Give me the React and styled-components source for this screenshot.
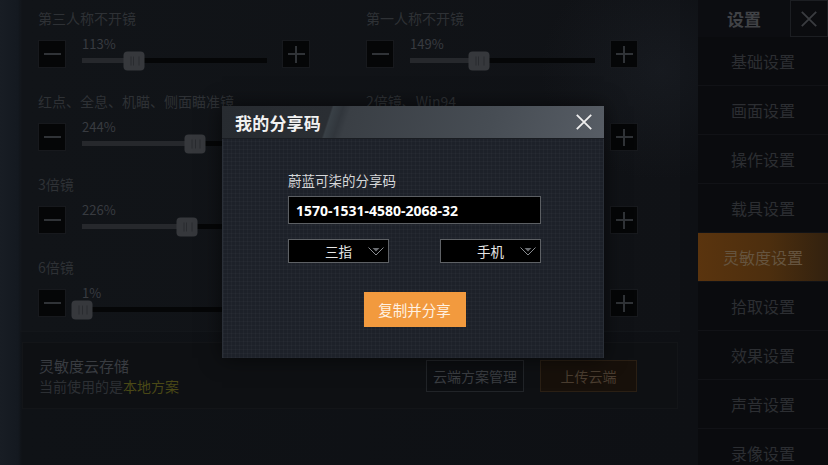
import React from "react";
import styled, { createGlobalStyle } from "styled-components";

const GlobalStyle = createGlobalStyle`
  html, body {
    margin: 0;
    padding: 0;
    background: #0d0f12;
  }
  body {
    font-family: "Noto Sans CJK SC", "Noto Sans", sans-serif;
  }
  * {
    box-sizing: border-box;
  }
`;

const MAX = 400;

// rows behind the dialog keep their controls but show no text
const settings = [
  { label: "第三人称不开镜", value: 113 },
  { label: "第一人称不开镜", value: 149 },
  { label: "红点、全息、机瞄、侧面瞄准镜", value: 244 },
  { label: "2倍镜、Win94", value: 200, covered: true },
  { label: "3倍镜", value: 226 },
  { label: "", value: 180, covered: true },
  { label: "6倍镜", value: 1 },
  { label: "", value: 100, covered: true },
];

const menu = [
  "基础设置",
  "画面设置",
  "操作设置",
  "载具设置",
  "灵敏度设置",
  "拾取设置",
  "效果设置",
  "声音设置",
  "录像设置",
];

const CloseIcon = ({ size, color }) => (
  <svg width={size} height={size} viewBox="0 0 20 20">
    <path d="M2 2 L18 18 M18 2 L2 18" stroke={color} strokeWidth="2" fill="none" />
  </svg>
);

const Chevron = () => (
  <svg width="16" height="9" viewBox="0 0 16 9">
    <polyline points="0.5,0.5 8,8 15.5,0.5" stroke="#8a8d91" strokeWidth="1" fill="none" />
    <polygon points="4.5,1 11.5,1 8,4.5" fill="#6b6e72" />
  </svg>
);

const Setting = ({ label, value, covered }) => {
  const pct = (value / MAX) * 100;
  return (
    <SettingBlock>
      <Label>{label}</Label>
      <Controls>
        <StepButton>
          <Bar />
        </StepButton>
        <Slider>
          <Percent>{covered ? "" : `${value}%`}</Percent>
          <Track>
            <Fill style={{ width: `${pct}%` }} />
            <Thumb style={{ left: `${pct}%` }} />
          </Track>
        </Slider>
        <StepButton>
          <Bar />
          <Bar $vertical />
        </StepButton>
      </Controls>
    </SettingBlock>
  );
};

export default function App() {
  return (
    <>
      <GlobalStyle />
      <Screen>
        <Main>
          <SettingsPanel>
            <SettingsGrid>
              {settings.map((s, i) => (
                <Setting key={i} {...s} />
              ))}
            </SettingsGrid>
          </SettingsPanel>
          <CloudBox>
            <CloudText>
              <CloudTitle>灵敏度云存储</CloudTitle>
              <CloudSub>
                当前使用的是<Local>本地方案</Local>
              </CloudSub>
            </CloudText>
            <CloudButton>云端方案管理</CloudButton>
            <CloudButton $upload>上传云端</CloudButton>
          </CloudBox>
        </Main>

        <Sidebar>
          <SideHeader>
            <SideTitle>设置</SideTitle>
            <SideClose>
              <CloseIcon size={18} color="#3a3c40" />
            </SideClose>
          </SideHeader>
          {menu.map((m) => (
            <MenuItem key={m} $active={m === "灵敏度设置"}>
              {m}
            </MenuItem>
          ))}
        </Sidebar>

        <Modal>
          <ModalHeader>
            <ModalTitle>我的分享码</ModalTitle>
            <ModalClose>
              <CloseIcon size={18} color="#f0f0f0" />
            </ModalClose>
          </ModalHeader>
          <ModalBody>
            <Content>
              <CodeLabel>蔚蓝可柒的分享码</CodeLabel>
              <CodeBox>1570-1531-4580-2068-32</CodeBox>
              <SelectRow>
                <Select>
                  三指
                  <ChevronSlot>
                    <Chevron />
                  </ChevronSlot>
                </Select>
                <Select>
                  手机
                  <ChevronSlot>
                    <Chevron />
                  </ChevronSlot>
                </Select>
              </SelectRow>
              <ShareButton>复制并分享</ShareButton>
            </Content>
          </ModalBody>
        </Modal>
      </Screen>
    </>
  );
}

const Screen = styled.div`
  position: relative;
  width: 828px;
  height: 465px;
  display: flex;
  overflow: hidden;
  background: #0d0f12;
`;

const Main = styled.div`
  width: 698px;
  height: 100%;
  padding-left: 20px;
  background:
    radial-gradient(ellipse 120px 110px at 660px 70px, rgba(60, 70, 84, 0.14), transparent),
    linear-gradient(90deg, #181d24 0px, #141920 18px, #0f1216 22px, #0e1014 100%);
`;

const SettingsPanel = styled.div`
  width: 660px;
  height: 332px;
  background: rgba(255, 255, 255, 0.01);
  border-bottom: 1px solid #13161a;
`;

const SettingsGrid = styled.div`
  display: grid;
  grid-template-columns: 272px 272px;
  column-gap: 56px;
  row-gap: 24px;
  padding: 9px 0 0 18px;
`;

const SettingBlock = styled.div`
  display: flex;
  flex-direction: column;
`;

const Label = styled.div`
  height: 18px;
  line-height: 18px;
  font-size: 14px;
  color: #2e3135;
  white-space: nowrap;
  margin-bottom: 13px;
`;

const Controls = styled.div`
  display: flex;
  align-items: flex-start;
  height: 28px;
`;

const StepButton = styled.div`
  position: relative;
  width: 28px;
  height: 28px;
  flex: none;
  background: #050607;
  border: 1px solid #17191d;
  display: flex;
  align-items: center;
  justify-content: center;
`;

const Bar = styled.span`
  position: absolute;
  background: #303337;
  width: ${(p) => (p.$vertical ? "2px" : "17px")};
  height: ${(p) => (p.$vertical ? "17px" : "2px")};
`;

const Slider = styled.div`
  flex: 1;
  margin: -3px 15px 0 16px;
`;

const Percent = styled.div`
  height: 14px;
  line-height: 14px;
  font-size: 13px;
  color: #383b40;
`;

const Track = styled.div`
  position: relative;
  height: 5px;
  margin-top: 7px;
  background: #050607;
`;

const Fill = styled.div`
  height: 100%;
  background: #26282c;
`;

const Thumb = styled.div`
  position: absolute;
  top: 50%;
  width: 21px;
  height: 19px;
  border-radius: 4px;
  background: #36383c;
  transform: translate(-50%, -50%);

  &::before {
    content: "";
    position: absolute;
    left: 7px;
    top: 5px;
    width: 7px;
    height: 9px;
    border-left: 1px solid #292b2f;
    border-right: 1px solid #292b2f;
    background: linear-gradient(90deg, transparent 2px, #292b2f 2px, #292b2f 3px, transparent 3px);
  }
`;

const CloudBox = styled.div`
  display: flex;
  align-items: center;
  gap: 16px;
  width: 656px;
  height: 67px;
  margin: 10px 0 0 2px;
  padding: 0 40px 0 16px;
  background: #0e1013;
  border: 1px solid #131518;
`;

const CloudText = styled.div`
  flex: 1;
  display: flex;
  flex-direction: column;
`;

const CloudTitle = styled.div`
  font-size: 15px;
  line-height: 21px;
  color: #393c41;
`;

const CloudSub = styled.div`
  font-size: 14px;
  line-height: 21px;
  color: #2c2f33;
`;

const Local = styled.span`
  color: #4a4816;
`;

const CloudButton = styled.div`
  width: ${(p) => (p.$upload ? "97px" : "98px")};
  height: 32px;
  display: flex;
  align-items: center;
  justify-content: center;
  font-size: 14px;
  color: ${(p) => (p.$upload ? "#4a3d30" : "#3a3d41")};
  background: ${(p) => (p.$upload ? "#17100a" : "#0c0e11")};
  border: 1px solid ${(p) => (p.$upload ? "#2a1f14" : "#212428")};
`;

const Sidebar = styled.div`
  width: 130px;
  height: 100%;
  background: #0a0b0e;
  display: flex;
  flex-direction: column;
`;

const SideHeader = styled.div`
  display: flex;
  height: 37px;
  flex: none;
`;

const SideTitle = styled.div`
  flex: 1;
  display: flex;
  align-items: center;
  justify-content: center;
  font-size: 17px;
  font-weight: 700;
  color: #404246;
  background: #0c0d11;
`;

const SideClose = styled.div`
  width: 38px;
  display: flex;
  align-items: center;
  justify-content: center;
  background: #0b0c0f;
  border: 1px solid #1c1e22;
`;

const MenuItem = styled.div`
  height: 49px;
  flex: none;
  display: flex;
  align-items: center;
  justify-content: center;
  font-size: 16px;
  color: ${(p) => (p.$active ? "#65543f" : "#2c2e32")};
  background: ${(p) =>
    p.$active
      ? "linear-gradient(90deg, #5a340e 0%, #4c2e0e 55%, #32210f 100%)"
      : "transparent"};
  border-bottom: 1px solid #111216;
`;

const Modal = styled.div`
  position: absolute;
  left: 222px;
  top: 106px;
  width: 382px;
  height: 252px;
  display: flex;
  flex-direction: column;
  box-shadow: 0 0 20px rgba(0, 0, 0, 0.6);
`;

const ModalHeader = styled.div`
  height: 33px;
  flex: none;
  display: flex;
  align-items: center;
  justify-content: space-between;
  padding: 0 11px 0 13px;
  background: linear-gradient(
    108deg,
    #272b30 0%,
    #2a2e33 28%,
    #394046 28.5%,
    #31363c 31%,
    #3a3f45 33%,
    #474d54 70%,
    #575d65 100%
  );
  border-bottom: 1px solid #1a1d22;
`;

const ModalTitle = styled.div`
  font-size: 17px;
  font-weight: 700;
  color: #f2f2f2;
  letter-spacing: 0.2px;
`;

const ModalClose = styled.div`
  display: flex;
  align-items: center;
`;

const ModalBody = styled.div`
  flex: 1;
  padding: 31px 0 0 65px;
  background-color: #1d2129;
  background-image:
    repeating-linear-gradient(0deg, rgba(255, 255, 255, 0.022) 0 1px, transparent 1px 4px),
    repeating-linear-gradient(90deg, rgba(255, 255, 255, 0.022) 0 1px, transparent 1px 4px);
  border-left: 1px solid #2a2f37;
  border-right: 1px solid #2a2f37;
`;

const Content = styled.div`
  width: 253px;
  display: flex;
  flex-direction: column;
`;

const CodeLabel = styled.div`
  font-size: 13.5px;
  line-height: 20px;
  color: #d6d7d9;
  margin-bottom: 6px;
`;

const CodeBox = styled.div`
  height: 28px;
  display: flex;
  align-items: center;
  padding-left: 7px;
  background: #000;
  border: 1px solid #5c5f63;
  font-family: "Noto Sans", "Noto Sans CJK SC", sans-serif;
  font-size: 14px;
  font-weight: 700;
  color: #fff;
`;

const SelectRow = styled.div`
  display: flex;
  justify-content: space-between;
  margin-top: 15px;
`;

const Select = styled.div`
  position: relative;
  width: 101px;
  height: 24px;
  display: flex;
  align-items: center;
  justify-content: center;
  background: #000;
  border: 1px solid #5e6165;
  font-size: 13.5px;
  color: #e6e6e6;
`;

const ChevronSlot = styled.span`
  position: absolute;
  right: 4px;
  top: 7px;
  display: flex;
`;

const ShareButton = styled.div`
  align-self: center;
  width: 102px;
  height: 35px;
  margin-top: 29px;
  display: flex;
  align-items: center;
  justify-content: center;
  background: #f29a3e;
  font-size: 14.5px;
  color: #fff1e2;
`;
